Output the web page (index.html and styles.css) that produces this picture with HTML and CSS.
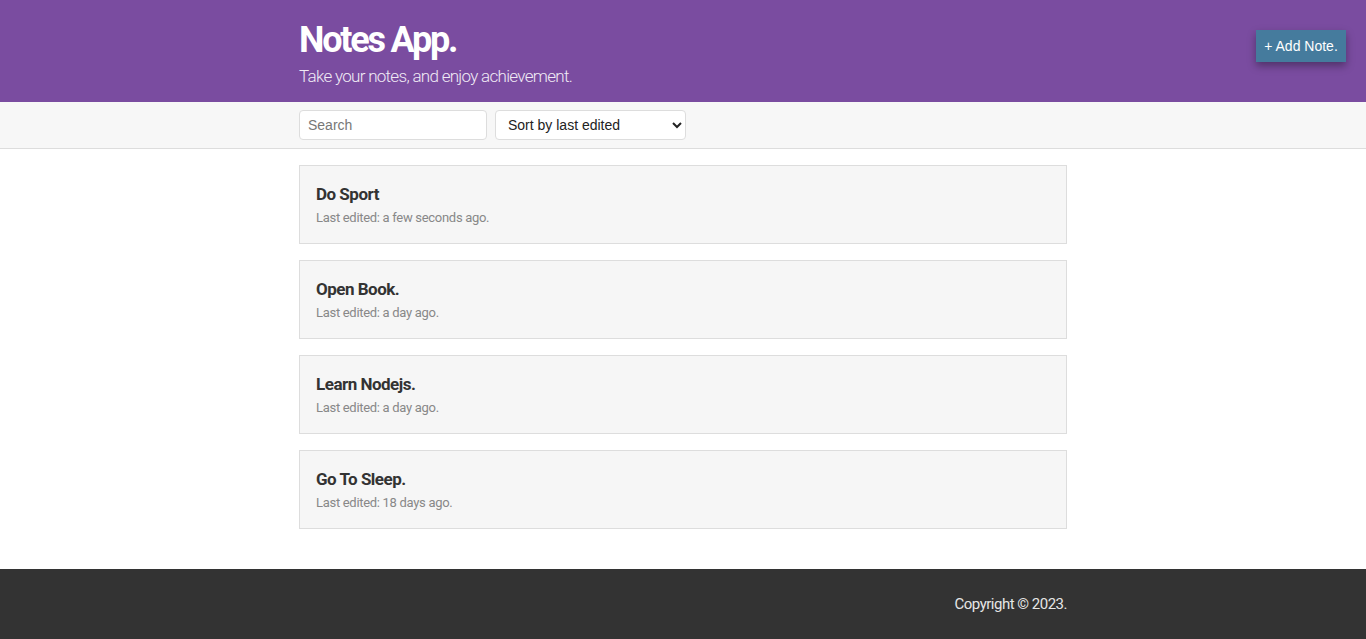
FILE: index.html
```html
<!DOCTYPE html>
<html lang="en">
<head>
<meta charset="utf-8">
<title>Notes App.</title>
<link rel="stylesheet" href="styles.css">
</head>
<body>
<header class="app-header">
  <div class="container">
    <h1 class="app-title">Notes App.</h1>
    <p class="app-subtitle">Take your notes, and enjoy achievement.</p>
  </div>
  <button class="add-btn" type="button">+ Add Note.</button>
</header>
<div class="toolbar">
  <div class="container toolbar-inner">
    <input class="search" type="text" placeholder="Search">
    <select class="sort">
      <option>Sort by last edited</option>
      <option>Sort by recently created</option>
      <option>Sort alphabetically</option>
    </select>
  </div>
</div>
<main class="container notes">
  <article class="note">
    <h2 class="note-title">Do Sport</h2>
    <p class="note-meta">Last edited: a few seconds ago.</p>
  </article>
  <article class="note">
    <h2 class="note-title">Open Book.</h2>
    <p class="note-meta">Last edited: a day ago.</p>
  </article>
  <article class="note">
    <h2 class="note-title">Learn Nodejs.</h2>
    <p class="note-meta">Last edited: a day ago.</p>
  </article>
  <article class="note">
    <h2 class="note-title">Go To Sleep.</h2>
    <p class="note-meta">Last edited: 18 days ago.</p>
  </article>
</main>
<footer class="app-footer">
  <div class="container footer-inner">Copyright © 2023.</div>
</footer>
</body>
</html>
```
FILE: styles.css
```css
* { box-sizing: border-box; }
html, body { margin: 0; padding: 0; }
body {
  font-family: "Roboto", "Noto Sans", sans-serif;
  color: #333;
  background: #fff;
}
.container {
  width: 768px;
  margin: 0 auto;
}
.app-header {
  background: #7a4ca0;
  color: #fff;
  height: 102px;
  padding-top: 18px;
  position: relative;
}
.app-title {
  margin: 0;
  font-size: 36px;
  font-weight: 700;
  line-height: 44px;
  letter-spacing: -2.2px;
}
.app-subtitle {
  margin: 0;
  font-size: 17px;
  line-height: 28px;
  letter-spacing: -0.7px;
  color: #f0eaf5;
  font-weight: 300;
}
.add-btn {
  position: absolute;
  top: 30px;
  right: 20px;
  width: 90px;
  height: 32px;
  border: none;
  background: #457b9d;
  color: #fff;
  font-family: "Liberation Sans", Arial, sans-serif;
  font-size: 14px;
  box-shadow: 0 4px 8px rgba(0,0,0,0.35);
  cursor: pointer;
}
.toolbar {
  background: #f7f7f7;
  border-bottom: 1px solid #ddd;
  height: 47px;
}
.toolbar-inner {
  display: flex;
  gap: 8px;
  padding-top: 8px;
}
.search, .sort {
  height: 30px;
  border: 1px solid #ddd;
  border-radius: 4px;
  background: #fff;
  font-family: "Liberation Sans", Arial, sans-serif;
  font-size: 14px;
  color: #222;
}
.search {
  width: 188px;
  padding: 0 8px;
}
.search::placeholder { color: #777; }
.sort {
  width: 191px;
  padding: 0 8px;
}
.notes {
  display: flex;
  flex-direction: column;
  gap: 16px;
  padding: 16px 0 40px;
}
.note {
  background: #f6f6f6;
  border: 1px solid #ddd;
  height: 79px;
  padding: 16px 16px;
}
.note-title {
  margin: 0;
  font-size: 17px;
  font-weight: 700;
  line-height: 24px;
  letter-spacing: -0.5px;
  color: #333;
}
.note-meta {
  margin: 0;
  font-size: 13px;
  line-height: 24px;
  letter-spacing: -0.3px;
  color: #888;
}
.app-footer {
  background: #333;
  height: 70px;
}
.footer-inner {
  text-align: right;
  color: #e6e6e6;
  font-size: 15px;
  line-height: 70px;
  letter-spacing: -0.5px;
}
```
